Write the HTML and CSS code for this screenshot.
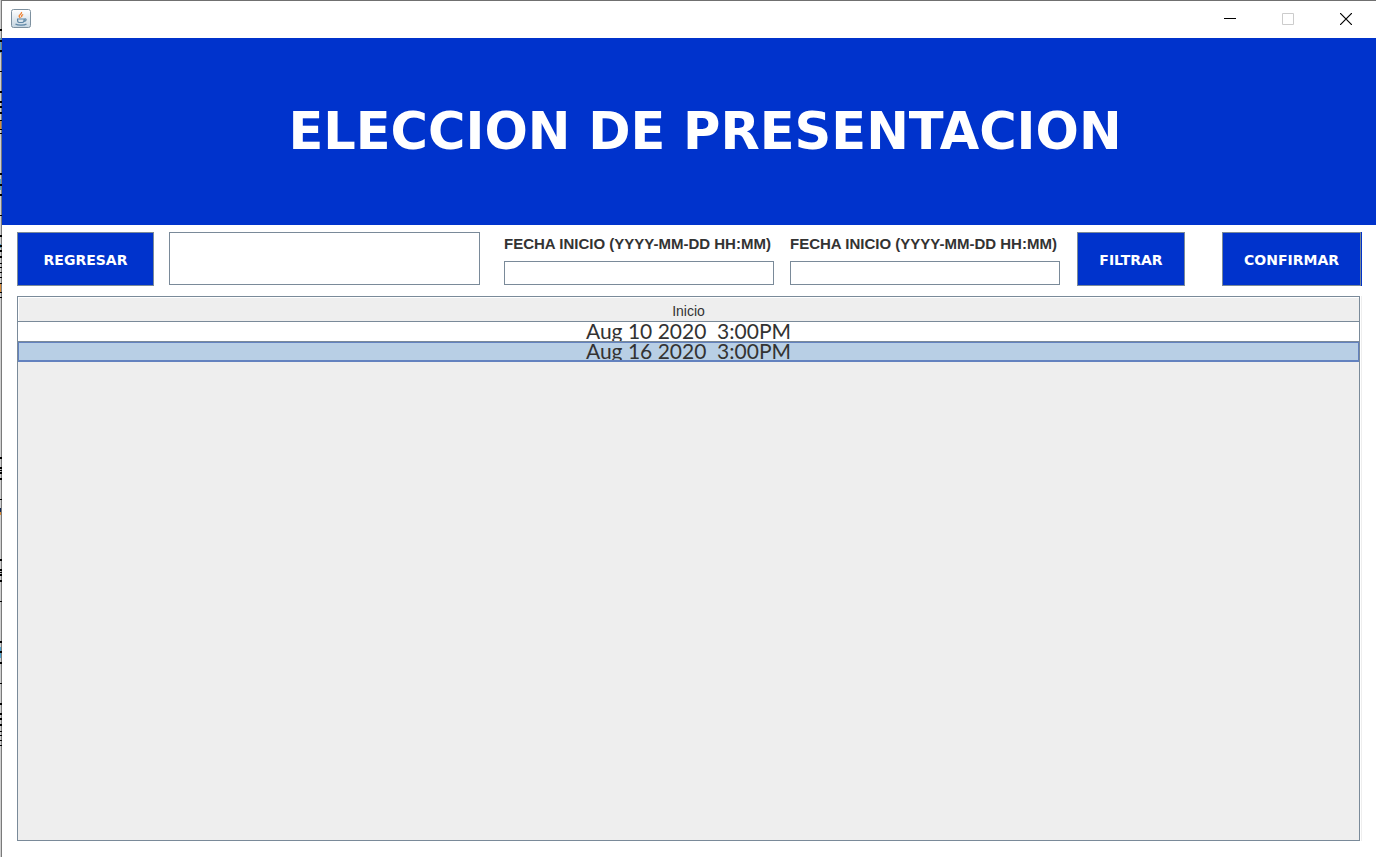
FILE: index.html
```html
<!DOCTYPE html>
<html lang="es">
<head>
<meta charset="utf-8">
<title>Eleccion de presentacion</title>
<link rel="stylesheet" href="styles.css">
</head>
<body>
<svg class="backdrop" width="2" aria-hidden="true">
  <rect width="2" height="100%" fill="#cfcfcf"/>
  <path fill="none" stroke="#4fa3cf" stroke-width="2" d="M1 38v15M1 179v11M1 244v4M1 647v11"/>
  <path fill="none" stroke="#d98a35" stroke-width="2" d="M1 121v8M1 284v8M1 512v3"/>
  <path fill="none" stroke="#10264f" stroke-width="2" d="M1 508v4"/>
  <path fill="none" stroke="#7a7a7a" d="M1.500 0V900"/>
  <path fill="none" stroke="#000" stroke-width="2" d="M0 30h2M0 41h2M0 51h2M0 92h2M0 102h2M0 107h2M0 113h2M0 174h2M0 185h2M0 195h2M0 236h2M0 246h2M0 251h2M0 257h2M0 458h2M0 468h2M0 473h2M0 479h2M0 560h2M0 570h2M0 575h2M0 581h2M0 642h2M0 652h2M0 663h2M0 704h2M0 714h2M0 719h2M0 725h2"/>
  <path fill="none" stroke="#000" d="M0 71.500h2M0 120.500h2M0 129.500h2M0 133.500h2M0 215.500h2M0 263.500h2M0 267.500h2M0 272.500h2M0 277.500h2M0 283.500h2M0 292.500h2M0 297.500h2M0 470.500h2M0 499.500h2M0 572.500h2M0 601.500h2M0 683.500h2M0 731.500h2M0 735.500h2M0 740.500h2M0 745.500h2"/>
</svg>
<div class="window">
  <header class="titlebar">
    <svg class="app-icon" width="20" height="20" viewBox="0 0 20 20" role="img" aria-label="Java">
      <defs>
        <linearGradient id="tile" x1="0" y1="0" x2="0" y2="1">
          <stop offset="0" stop-color="#ffffff"/><stop offset="1" stop-color="#c5d5e1"/>
        </linearGradient>
      </defs>
      <rect x=".5" y=".5" width="19" height="18" rx="2" fill="url(#tile)" stroke="#7d909f"/>
      <path d="M10.500 3c1 2-3 2.800-2.400 4.400.2.700 1 1.100 1.300 1.700M12.200 5.500c-1.800 1-2 1.500-1.200 2.500" fill="none" stroke="#ef7f2d" stroke-width="1.300"/>
      <path d="M6 10h7.500M6.500 10.500c0 2 .5 3 1.500 3h3.500c1 0 1.500-1 1.700-3M13.500 10c2-.5 2.500 1.800-.5 2.500M4.500 15c2 1.500 9 1.500 11 0" fill="none" stroke="#5f87a5" stroke-width="1.200"/>
    </svg>
    <div class="window-controls">
      <button type="button" class="control" aria-label="Minimizar"><svg width="12" height="12" viewBox="0 0 12 12"><path d="M0 5.500h12" stroke="#000"/></svg></button>
      <button type="button" class="control" aria-label="Maximizar" disabled><svg width="12" height="12" viewBox="0 0 12 12"><path d="M.5.500h11v11H.5z" fill="none" stroke="#ccc"/></svg></button>
      <button type="button" class="control" aria-label="Cerrar"><svg width="12" height="12" viewBox="0 0 12 12"><path d="M0 0l12 12M12 0L0 12" stroke="#000" stroke-width="1.200"/></svg></button>
    </div>
  </header>
  <div class="banner"><h1 class="banner-title">ELECCION DE PRESENTACION</h1></div>
  <main class="content">
    <form class="toolbar">
      <button type="button" class="action back">REGRESAR</button>
      <input class="box search" type="text" aria-label="Buscar">
      <div class="dates">
        <div class="field">
          <label for="from">FECHA INICIO (YYYY-MM-DD HH:MM)</label>
          <input class="box" id="from" type="text">
        </div>
        <div class="field">
          <label for="to">FECHA INICIO (YYYY-MM-DD HH:MM)</label>
          <input class="box" id="to" type="text">
        </div>
      </div>
      <button type="button" class="action filter">FILTRAR</button>
      <button type="button" class="action confirm">CONFIRMAR</button>
    </form>
    <div class="table-pane">
      <table class="shows">
        <thead><tr><th scope="col">Inicio</th></tr></thead>
        <tbody>
          <tr><td><div class="cell">Aug 10 2020&nbsp; 3:00PM</div></td></tr>
          <tr class="selected"><td><div class="cell">Aug 16 2020&nbsp; 3:00PM</div></td></tr>
        </tbody>
      </table>
    </div>
  </main>
</div>
</body>
</html>
```
FILE: styles.css
```css
* {
  box-sizing: border-box;
}

body {
  margin: 0;
  min-height: 100vh;
  display: flex;
  background: #fff;
  color: #333;
  font-family: "Liberation Sans", Arial, sans-serif;
}

.backdrop {
  flex: none;
  align-self: stretch;
  height: auto;
}

.window {
  flex: 1;
  min-width: 0;
  display: flex;
  flex-direction: column;
  border-top: 1px solid #707070;
}

.titlebar {
  height: 37px;
  display: flex;
  align-items: flex-start;
  justify-content: space-between;
  padding-left: 9px;
}

.app-icon {
  display: block;
  margin-top: 8px;
}

.window-controls {
  display: flex;
  padding-right: 1px;
}

.control {
  width: 58px;
  height: 36px;
  padding: 0;
  border: 0;
  background: none;
  display: flex;
  align-items: center;
  justify-content: center;
}

.banner {
  height: 187px;
  display: flex;
  align-items: center;
  justify-content: center;
  padding-left: 32px;
  background: #0033cc;
}

.banner-title {
  margin: 0;
  color: #fff;
  font: 700 51px/60px "DejaVu Sans", sans-serif;
  white-space: nowrap;
}

.content {
  flex: 1;
  display: flex;
  flex-direction: column;
  gap: 10px;
  padding: 7px 14px 16px 15px;
}

.toolbar {
  display: flex;
  height: 54px;
}

.action {
  border: 1px solid #7a8a99;
  padding: 1px 0 0;
  background: #0033cc;
  color: #fff;
  font: 700 14px/20px "DejaVu Sans", sans-serif;
}

.back {
  width: 137px;
  margin-right: 15px;
}

.filter {
  width: 108px;
  margin: 0 37px 0 17px;
}

.confirm {
  width: 139px;
  margin-right: 1px;
  box-shadow: 1px 0 #0033cc;
}

.box {
  border: 1px solid #7a8a99;
  border-radius: 0;
  padding: 0 4px;
  background: #fff;
  font: 14px "Liberation Sans", Arial, sans-serif;
}

.search {
  flex: 1;
  min-width: 0;
  height: 53px;
  margin-right: 24px;
}

.dates {
  display: flex;
  gap: 16px;
}

.field {
  width: 270px;
  display: flex;
  flex-direction: column;
  gap: 5px;
}

.field label {
  font-size: 15px;
  font-weight: bold;
  line-height: 24px;
  white-space: nowrap;
}

.field .box {
  height: 24px;
}

.table-pane {
  flex: 1;
  margin-right: 2px;
  border: 1px solid #7a8a99;
  background: #eee;
  box-shadow: 1px 0 #fff, 2px 0 #eee;
}

.shows {
  width: 100%;
  border-collapse: separate;
  border-spacing: 0;
}

.shows th {
  height: 25px;
  padding: 4px 0 0;
  border-bottom: 1px solid #7a8a99;
  box-shadow: inset 1px 1px #fff;
  font-size: 14px;
  font-weight: normal;
  line-height: 20px;
}

.shows td {
  height: 20px;
  padding: 0;
  border-bottom: 1px solid #7a8a99;
  background: #fff;
  text-align: center;
}

.shows .selected td {
  border: 1px solid #6382bf;
  border-bottom: 2px solid #6382bf;
  background: #b8cfe5;
}

.cell {
  height: 19px;
  overflow: hidden;
  font: 21px/18px Lato, sans-serif;
}

.selected .cell {
  height: 17px;
  line-height: 16px;
}
```
